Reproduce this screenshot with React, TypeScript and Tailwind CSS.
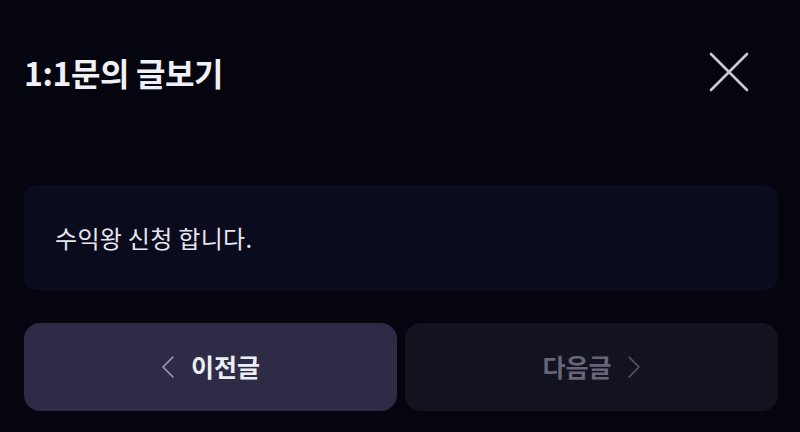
import React from "react";

const font = { fontFamily: '"Noto Sans CJK KR", "Noto Sans", sans-serif' };

const Chevron = ({ dir, className }: { dir: "left" | "right"; className?: string }) => (
  <svg width="14" height="22" viewBox="0 0 14 22" fill="none" className={className}>
    <path
      d={dir === "left" ? "M12 1 L2 11 L12 21" : "M2 1 L12 11 L2 21"}
      stroke="currentColor"
      strokeWidth="1.6"
      strokeLinecap="round"
      strokeLinejoin="round"
    />
  </svg>
);

export default function App() {
  return (
    <div className="w-[800px] h-[432px] bg-[#05050f] flex flex-col pl-6 pr-[22px] pt-[46px]" style={font}>
      {/* Header */}
      <div className="flex items-center justify-between h-[52px]">
        <h1 className="text-[32px] font-bold text-[#f0f0f5] tracking-[-0.4px]">1:1문의 글보기</h1>
        <button className="w-[40px] h-[40px] mr-[29px] flex items-center justify-center text-[#c9c9ce]">
          <svg width="40" height="40" viewBox="0 0 40 40" fill="none">
            <path d="M2 2 L38 38 M38 2 L2 38" stroke="currentColor" strokeWidth="2.6" strokeLinecap="round" />
          </svg>
        </button>
      </div>

      {/* Content */}
      <div className="mt-[87px] h-[105px] rounded-xl bg-[#0a0b1c] flex items-center px-[31px]">
        <p className="text-[24px] text-[#e6e6ee] tracking-[0.3px]">수익왕 신청 합니다.</p>
      </div>

      {/* Navigation */}
      <div className="mt-[33px] grid grid-cols-2 gap-2 h-[88px]">
        <button className="rounded-2xl bg-[#2e2b47] flex items-center justify-center gap-[16px]">
          <Chevron dir="left" className="text-[#9d9cb0]" />
          <span className="text-[25px] font-bold text-[#ededf3]">이전글</span>
        </button>
        <button className="rounded-2xl bg-[#13131f] flex items-center justify-center gap-[15px]">
          <span className="text-[25px] font-bold text-[#66667a]">다음글</span>
          <Chevron dir="right" className="text-[#55556a]" />
        </button>
      </div>
    </div>
  );
}
